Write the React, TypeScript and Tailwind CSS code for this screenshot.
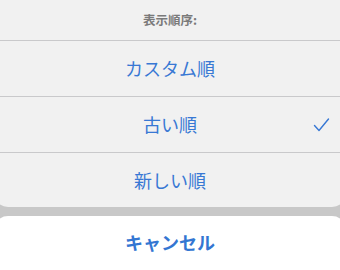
import React from 'react';

const options = [
  { label: 'カスタム順', checked: false },
  { label: '古い順', checked: true },
  { label: '新しい順', checked: false },
];

const font = { fontFamily: '"Noto Sans CJK JP", "Noto Sans", sans-serif' };

export default function App() {
  return (
    <div className="w-[340px] h-[270px] overflow-hidden bg-[#c8c8c8]" style={font}>
      <div className="-mx-[6px] bg-[#f1f1f1] rounded-b-[14px]">
        <div className="h-[41px] flex items-center justify-center text-[12.5px] font-semibold text-[#7a7a7a] border-b border-[#c9c9cb]">
          表示順序:
        </div>
        {options.map((opt, i) => (
          <div
            key={opt.label}
            className={`relative flex items-center justify-center text-[18px] text-[#3878d4] ${
              i < options.length - 1 ? 'h-[56px] border-b border-[#c9c9cb]' : 'h-[54px]'
            }`}
          >
            {opt.label}
            {opt.checked && (
              <svg
                className="absolute right-[16px] top-1/2 -translate-y-1/2"
                width="17"
                height="15"
                viewBox="0 0 17 15"
                fill="none"
              >
                <path d="M1.5 8 L6 13 L15.5 1.5" stroke="#3878d4" strokeWidth="1.4" strokeLinecap="round" strokeLinejoin="round" />
              </svg>
            )}
          </div>
        ))}
      </div>
      <div className="-mx-[6px] mt-[9px] h-[60px] bg-white rounded-t-[14px] flex items-center justify-center pb-[8px] text-[18px] font-bold text-[#3376d2]">
        キャンセル
      </div>
    </div>
  );
}
